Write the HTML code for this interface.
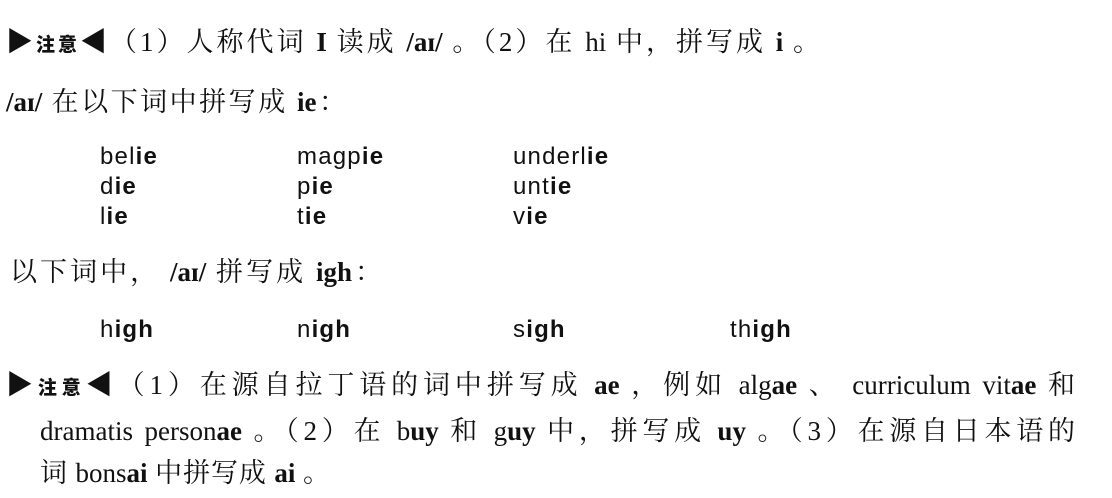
<!DOCTYPE html>
<html><head><meta charset="utf-8"><style>
body{margin:0;width:1112px;height:498px;background:#fff;position:relative;overflow:hidden;color:#111;
font-family:"Liberation Serif","Noto Serif CJK SC",serif;font-size:27px}
.l{position:absolute;white-space:nowrap;line-height:30px;text-align:justify;text-align-last:justify;text-justify:inter-character}
b{font-weight:bold}
.n{font-family:"Noto Sans CJK SC",sans-serif;font-weight:900;font-size:19px}
.w{position:absolute;font-family:"Liberation Sans",sans-serif;font-size:24px;letter-spacing:1.2px;line-height:30px}
</style></head><body>
<div class="l" style="left:6px;top:27px;width:814px">▶<span class="n">注意</span>◀（1）人称代词 <b>I</b> 读成 <b>/aɪ/</b> 。（2）在 hi 中，拼写成 <b>i</b> 。</div>
<div class="l" style="left:6px;top:87px;width:340px"><b>/aɪ/</b> 在以下词中拼写成 <b>ie</b>：</div>
<div class="w" style="left:100px;top:142px">bel<b>ie</b><br>d<b>ie</b><br>l<b>ie</b></div>
<div class="w" style="left:297px;top:142px">magp<b>ie</b><br>p<b>ie</b><br>t<b>ie</b></div>
<div class="w" style="left:513px;top:142px">underl<b>ie</b><br>unt<b>ie</b><br>v<b>ie</b></div>
<div class="l" style="left:10px;top:257px;width:372px">以下词中， <b>/aɪ/</b> 拼写成 <b>igh</b>：</div>
<div class="w" style="left:100px;top:315px">h<b>igh</b></div>
<div class="w" style="left:297px;top:315px">n<b>igh</b></div>
<div class="w" style="left:513px;top:315px">s<b>igh</b></div>
<div class="w" style="left:730px;top:315px">th<b>igh</b></div>
<div class="l" style="left:6px;top:370px;width:1069px">▶<span class="n">注意</span>◀（1）在源自拉丁语的词中拼写成 <b>ae</b> ，例如 alg<b>ae</b> 、 curriculum vit<b>ae</b> 和</div>
<div class="l" style="left:40px;top:416px;width:1035px">dramatis person<b>ae</b> 。（2）在 b<b>uy</b> 和 g<b>uy</b> 中，拼写成 <b>uy</b> 。（3）在源自日本语的</div>
<div class="l" style="left:40px;top:458px;width:290px">词 bons<b>ai</b> 中拼写成 <b>ai</b> 。</div>
</body></html>
